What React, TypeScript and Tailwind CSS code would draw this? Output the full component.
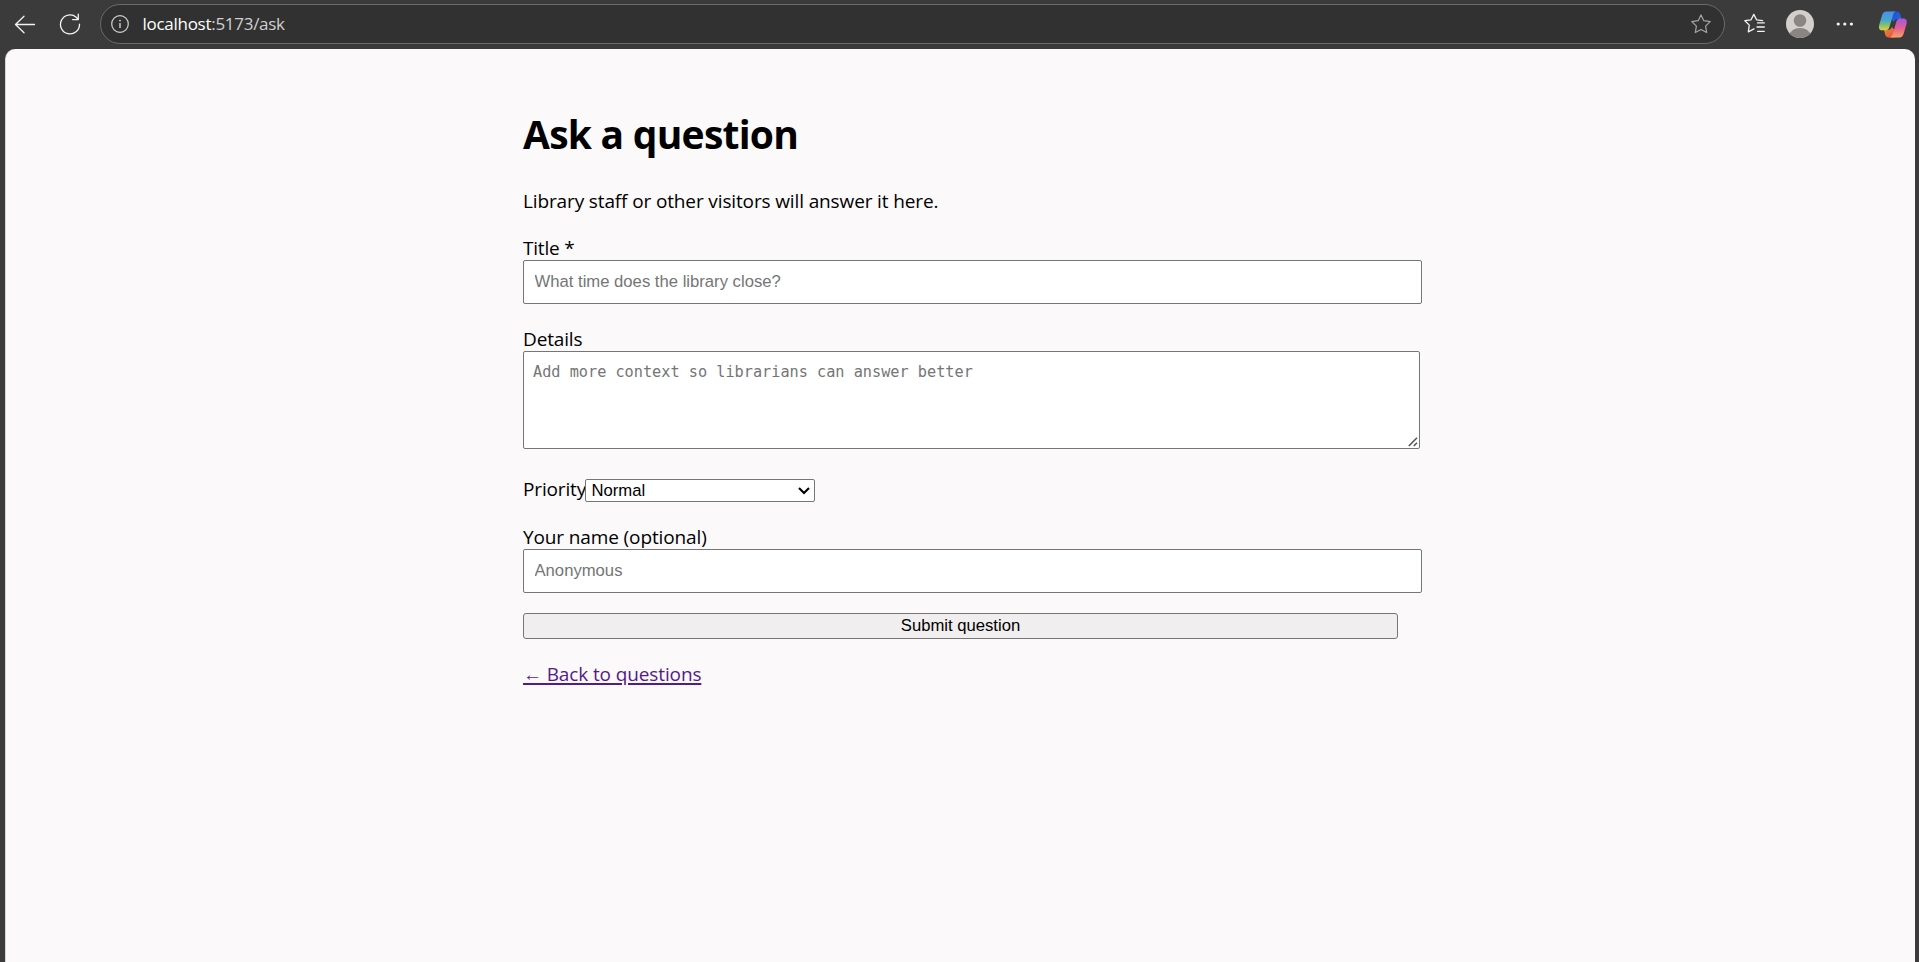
import type { ReactNode } from "react";

function BrowserBar() {
  return (
    <header className="flex h-[49px] shrink-0 items-center bg-[#3b3b3b] pb-px">
      <svg className="ml-[14px] size-[22px] shrink-0" viewBox="0 0 22 22" fill="none" stroke="#f3f3f3" strokeWidth="1.3" strokeLinecap="round" strokeLinejoin="round">
        <path d="M20.5 11.5H1.5M10 3.2L1.5 11.5L10 19.8" />
      </svg>
      <svg className="ml-[23px] size-[22px] shrink-0" viewBox="0 0 22 22" fill="none" stroke="#f3f3f3" strokeWidth="1.3" strokeLinecap="round" strokeLinejoin="round">
        <path d="M20.5 11.2A9.5 9.5 0 1 1 17.2 4.2L19 6.2M19.3 1.2V6.6H13.6" />
      </svg>
      <div className="ml-[19px] flex h-[40px] w-[1625px] shrink-0 items-center rounded-full border border-[#6b6b6b] bg-[#313131]">
        <svg className="ml-[10px] size-[18px] shrink-0" viewBox="0 0 18 18" fill="none" stroke="#d2d2d2" strokeWidth="1.2">
          <circle cx="9" cy="9" r="8.3" />
          <path d="M9 8V13" strokeWidth="1.4" />
          <circle cx="9" cy="5.6" r="0.9" fill="#d2d2d2" stroke="none" />
        </svg>
        <div className="ml-[13.5px] font-['Open_Sans',sans-serif] text-[17px] leading-[24px] tracking-[-0.28px] text-[#d0d0d0]">
          <span className="text-white">localhost</span>:5173/ask
        </div>
        <svg className="mr-[13px] ml-auto size-[20px] shrink-0" viewBox="0 0 20 20" fill="none" stroke="#a5a5a5" strokeWidth="1.2" strokeLinejoin="round">
          <path d="M10 .9L12.8 6.7L19.2 7.6L14.6 12.1L15.7 18.5L10 15.5L4.3 18.5L5.4 12.1L.8 7.6L7.2 6.7Z" />
        </svg>
      </div>
      <svg className="ml-[19px] h-[22px] w-[21px] shrink-0" viewBox="0 0 21 22" fill="none" stroke="#f3f3f3" strokeWidth="1.3" strokeLinecap="round" strokeLinejoin="round">
        <path d="M18.5 7.6L12.6 6.8L9.8 1.4L7 6.8L.9 7.7L5.3 12.1L4.3 18.8L10 15.9M13.6 9.9H20.3M13 14H20.3M13.6 18.3H20.3" />
      </svg>
      <svg className="ml-[21px] size-[28px] shrink-0" viewBox="0 0 28 28">
        <clipPath id="avatar">
          <circle cx="14" cy="14" r="14" />
        </clipPath>
        <g clipPath="url(#avatar)">
          <path d="M0 0H28V28H0Z" fill="#d3cfcd" />
          <circle cx="14" cy="10.5" r="6.3" fill="#8a8583" />
          <ellipse cx="14" cy="25.5" rx="10.6" ry="7.6" fill="#8a8583" />
        </g>
      </svg>
      <svg className="ml-[22px] h-[6px] w-[18px] shrink-0" viewBox="0 0 18 6" fill="#f3f3f3">
        <circle cx="2.2" cy="3" r="1.6" />
        <circle cx="8.8" cy="3" r="1.6" />
        <circle cx="15.4" cy="3" r="1.6" />
      </svg>
      <svg className="ml-[24px] h-[27px] w-[30px] shrink-0" viewBox="0 0 30 27">
        <defs>
          <linearGradient id="blueYellow" x1="0" y1="0" x2="0" y2="1">
            <stop offset="0.1" stopColor="#4a93e6" />
            <stop offset="0.45" stopColor="#45a6cf" />
            <stop offset="0.72" stopColor="#7fc070" />
            <stop offset="1" stopColor="#e6d23a" />
          </linearGradient>
          <linearGradient id="purpleOrange" x1="0" y1="0" x2="0" y2="1">
            <stop offset="0" stopColor="#a457e0" />
            <stop offset="0.5" stopColor="#e45f92" />
            <stop offset="1" stopColor="#f5a262" />
          </linearGradient>
          <linearGradient id="deepBlue" x1="0" y1="0" x2="1" y2="1">
            <stop offset="0" stopColor="#1b49cf" />
            <stop offset="1" stopColor="#2c6cd8" />
          </linearGradient>
          <linearGradient id="redOrange" x1="0" y1="0" x2="1" y2="1">
            <stop offset="0" stopColor="#f08a3c" />
            <stop offset="1" stopColor="#e2503a" />
          </linearGradient>
        </defs>
        <path d="M12 .5H18.5C21 .5 21.8 2 22.4 4L23.4 8H19.5C17.5 8 16.5 8.6 15.6 11L13 8Z" fill="url(#deepBlue)" />
        <path d="M17.5 26.5H11C8.5 26.5 7.6 25 7 23L6 18.8H10C12 18.8 13 18.2 13.9 16L16.5 19Z" fill="url(#redOrange)" />
        <path d="M8.5 .5H18C16.2 .9 15.5 2.5 15 4.2L11.4 16C10.8 18.2 9.5 19.3 7.5 19.3H4.2C1.3 19.3 .4 17 1.2 14L4 4.4C4.8 1.8 6 .5 8.5 .5Z" fill="url(#blueYellow)" />
        <path d="M21.2 26.5H11.8C13.6 26.1 14.3 24.5 14.8 22.8L18.3 11C18.9 8.8 20 7.6 22.2 7.6H25.5C28.4 7.6 29.3 10 28.5 13L25.7 22.6C24.9 25.2 23.7 26.5 21.2 26.5Z" fill="url(#purpleOrange)" />
      </svg>
    </header>
  );
}

function Label({ children, className }: { children: ReactNode; className: string }) {
  return <span className={`block h-[26px] leading-[29px] whitespace-nowrap ${className}`}>{children}</span>;
}

const inputClass =
  "block h-[44px] w-[899px] rounded-[2px] border border-[#767676] bg-white pr-[11px] pl-[10.5px] font-['Liberation_Sans',Arial,sans-serif] text-[16.667px] text-black placeholder:text-[#757575] outline-none";

export default function App() {
  return (
    <div className="flex h-[962px] w-[1919px] flex-col overflow-hidden bg-[#3b3b3b]">
      <BrowserBar />
      <main className="mr-[4px] ml-[5px] flex-1 rounded-t-[10px] border-l border-[#d8d6d7] bg-[#fbf9fa] pt-[58px] pl-[517px] font-['Open_Sans',sans-serif] text-[19px] text-black">
        <h1 className="text-[39px] leading-[54px] font-bold tracking-[-0.75px]">Ask a question</h1>
        <p className="mt-[26px] h-[27px] leading-[29px] tracking-[-0.13px]">Library staff or other visitors will answer it here.</p>
        <form className="mt-[20px] flex flex-col items-start" onSubmit={(e) => e.preventDefault()}>
          <label>
            <Label className="tracking-[-0.2px]">Title *</Label>
            <input className={inputClass} placeholder="What time does the library close?" />
          </label>
          <label className="mt-[21px]">
            <Label className="tracking-[-0.15px]">Details</Label>
            <span className="relative block h-[98px] w-[897px]">
              <textarea
                className="block h-full w-full resize-none rounded-[2px] border border-[#767676] bg-white px-[9px] py-[10px] font-['DejaVu_Sans_Mono',monospace] text-[15.22px] leading-[20px] text-black outline-none placeholder:text-[#757575]"
                placeholder="Add more context so librarians can answer better"
              />
              <svg className="absolute right-[2px] bottom-[2px] size-[10px]" viewBox="0 0 10 10" stroke="#555" strokeWidth="1.6">
                <path d="M.8 9L9 .8M5.8 9L9 5.8" />
              </svg>
            </span>
          </label>
          <label className="mt-[26px] flex h-[27px]">
            <span className="w-[62px] leading-[29px] tracking-[-0.15px] whitespace-nowrap">Priority</span>
            <span className="relative mt-[4px] block h-[23px] w-[230px]">
              <select className="block h-full w-full appearance-none rounded-[2px] border border-[#767676] bg-white pl-[5.5px] font-['Liberation_Sans',Arial,sans-serif] text-[16.667px] leading-[19px] text-black outline-none" defaultValue="Normal">
                <option>Normal</option>
              </select>
              <svg className="pointer-events-none absolute top-[8px] right-[5px] h-[8px] w-[12px]" viewBox="0 0 12 8" fill="none" stroke="#000" strokeWidth="2.1">
                <path d="M1 1L6 6L11 1" />
              </svg>
            </span>
          </label>
          <label className="mt-[21px]">
            <Label className="tracking-[-0.12px]">Your name (optional)</Label>
            <input className={inputClass} placeholder="Anonymous" />
          </label>
          <button className="mt-[20px] h-[26px] w-[875px] rounded-[3px] border border-[#767676] bg-[#f0eeee] pb-px font-['Liberation_Sans',Arial,sans-serif] text-[16.667px] leading-[22px] text-black">
            Submit question
          </button>
        </form>
        <a href="#questions" className="mt-[22px] inline-block leading-[27px] tracking-[-0.12px] text-[#551a8b] underline decoration-2 underline-offset-[2px]">
          ← Back to questions
        </a>
      </main>
    </div>
  );
}
